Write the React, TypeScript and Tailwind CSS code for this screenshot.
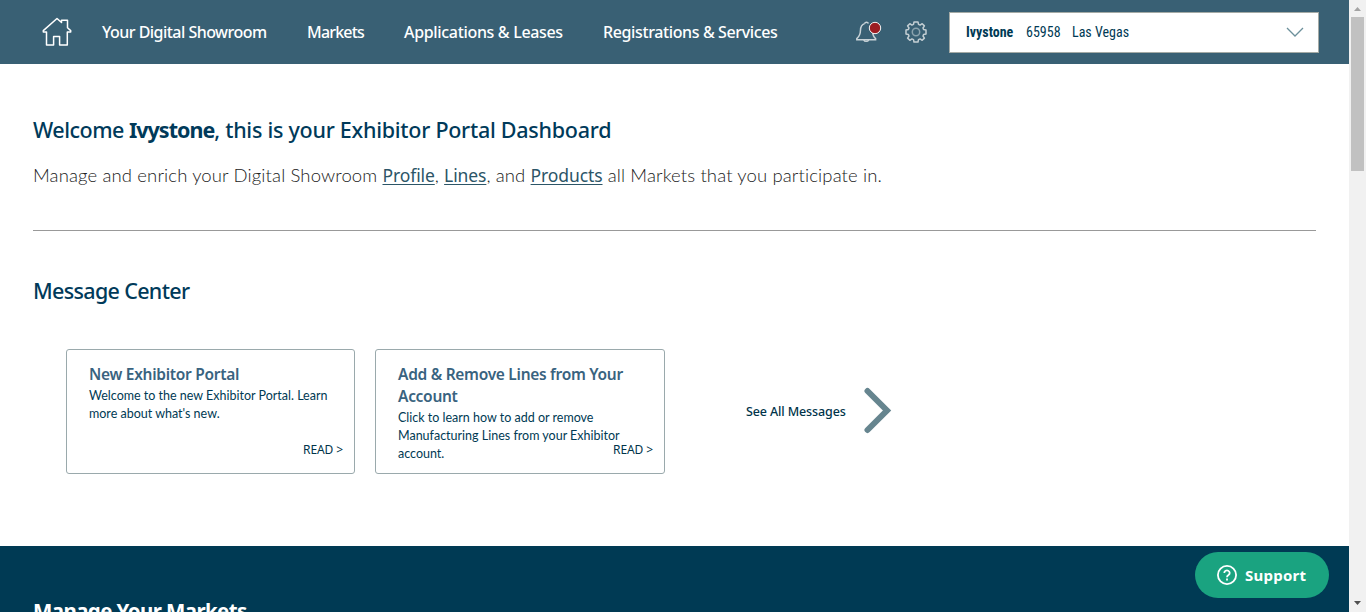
import type { ReactNode } from "react";

const FIRA = "font-['Noto_Sans','Open_Sans',sans-serif]";
const AVENIR = "font-['Lato',sans-serif]";
const TEXT_LINK = "text-[17.5px] font-normal tracking-[-0.1px] text-[#2c5567] underline decoration-1 underline-offset-2 font-['Noto_Sans','Open_Sans',sans-serif]";

function HomeIcon() {
  return (
    <svg className="block h-[30px] w-[30px]" viewBox="0 0 30 30" fill="none" stroke="#fff" strokeWidth="1.5" strokeLinejoin="round">
      <path d="M4.500 28V15H1.300V13.600L15 1.500L19.500 5.500V3.300H25.500V10.800L28.700 13.600V15H25.300V28H17.600V19.400H11.600V28Z" />
    </svg>
  );
}

function BellIcon() {
  return (
    <svg className="block h-[26px] w-[28px]" viewBox="0 0 28 26" fill="none" stroke="#c9d3d8" strokeWidth="1.5">
      <path d="M9.600 4.600a2 2 0 0 1 3.800 0M9.600 4.600C6.600 5.600 5.600 8 5.500 11C5.400 15.500 4 17.800 1.800 19.600V20.800H20.600V19.600C18.600 18 17.700 15.800 17.500 12" />
      <path d="M8.800 21a2.500 1.900 0 0 0 4.800 0" />
      <circle cx="20" cy="9" r="5.700" fill="#9b1c22" stroke="#f2f2f2" strokeWidth="1" />
    </svg>
  );
}

function GearIcon() {
  return (
    <svg className="block h-[22px] w-[22px]" viewBox="0 0 22 22" fill="none" stroke="#c3ced3" strokeWidth="1.500" strokeLinejoin="round">
      <path d="M9 1h4l.5 2.400 1.600.7 2.100-1.400 2.200 2.200L18 7l.6 1.500 2.400.6v3.800l-2.400.6L18 15l1.400 2.100-2.200 2.200-2.100-1.400-1.600.7L13 21H9l-.5-2.400-1.600-.7-2.100 1.400-2.200-2.200L4 15l-.6-1.500L1 12.900V9.100l2.400-.6L4 7 2.600 4.900l2.200-2.200L6.900 4.100l1.600-.7Z" />
      <circle cx="11" cy="11" r="3.700" stroke="#8ba3ae" />
    </svg>
  );
}

function NavItem({ className, children }: { className: string; children: ReactNode }) {
  return <a className={`shrink-0 whitespace-nowrap text-[16px] leading-6 font-medium text-white ${className}`}>{children}</a>;
}

function MessageCard({ title, className, children }: { title: ReactNode; className: string; children: ReactNode }) {
  return (
    <article className={`relative h-[125px] rounded-[3px] border border-[#9aa9ac] pt-[13px] pl-[22px] ${className}`}>
      <h3 className="text-[15.5px] leading-[22px] font-semibold tracking-[-0.29px] whitespace-nowrap text-[#39637f]">{title}</h3>
      <p className={`mt-[2px] text-[12.5px] leading-[18px] whitespace-nowrap text-[#003a54] ${AVENIR}`}>{children}</p>
      <a className="absolute right-[11px] bottom-[14px] text-[12px] leading-[18px] tracking-[-0.1px] text-[#003349]">READ &gt;</a>
    </article>
  );
}

export default function App() {
  return (
    <div className={`flex h-[612px] w-[1366px] overflow-hidden bg-white ${FIRA}`}>
      <div className="relative flex w-[1349px] flex-col">
        <header className="flex h-16 shrink-0 items-center bg-[#396074] pl-[42px]">
          <a className="mr-[30px]"><HomeIcon /></a>
          <nav className="flex w-[753px]">
            <NavItem className="w-[205px] tracking-[-0.53px]">Your Digital Showroom</NavItem>
            <NavItem className="w-[97px] tracking-[-0.8px]">Markets</NavItem>
            <NavItem className="w-[199px] tracking-[-0.33px]">Applications &amp; Leases</NavItem>
            <NavItem className="tracking-[-0.38px]">Registrations &amp; Services</NavItem>
          </nav>
          <BellIcon />
          <div className="ml-[22px]"><GearIcon /></div>
          <div className="ml-[22px] flex h-[41px] w-[370px] items-center border border-[#a4aaa5] bg-white pr-[14px] pl-4 font-['Roboto_Condensed','Roboto',sans-serif] text-[14px] text-[#003a54] [font-stretch:75%]">
            <span className="w-[60px] font-bold">Ivystone</span>
            <span className="w-[46px]">65958</span>
            <span className="grow">Las Vegas</span>
            <svg className="h-[10px] w-[18px]" viewBox="0 0 18 10" fill="none" stroke="#6c909b" strokeWidth="1.3"><path d="M1 1L9 9L17 1" /></svg>
          </div>
        </header>
        <main className="flex h-[482px] shrink-0 flex-col pr-[33px] pl-[33px]">
          <h1 className="mt-[50px] text-[21.5px] leading-8 font-medium tracking-[-0.26px] whitespace-nowrap text-[#003a5a]">
            <span className="tracking-[-0.5px]">Welcome </span><b className="font-bold tracking-[-1px]">Ivystone</b>, this is your Exhibitor Portal Dashboard
          </h1>
          <p className={`mt-[15px] mb-px text-[18.5px] leading-7 font-light tracking-[0.13px] whitespace-nowrap text-[#222] ${AVENIR}`}>
            Manage and enrich your Digital Showroom <a className={TEXT_LINK}>Profile</a>, <a className={TEXT_LINK}>Lines</a>, and <a className={TEXT_LINK}>Products</a> all Markets that you participate in.
          </p>
          <hr className="mt-[40px] border-[#999]" />
          <h2 className="mt-[44px] text-[21.5px] leading-8 font-medium tracking-[-0.67px] whitespace-nowrap text-[#003a5a]">Message Center</h2>
          <section className="mt-[42px] flex pl-[33px]">
            <MessageCard className="mr-5 w-[289px]" title="New Exhibitor Portal">
              Welcome to the new Exhibitor Portal. Learn<br />more about what's new.
            </MessageCard>
            <MessageCard className="w-[290px]" title={<>Add &amp; Remove Lines from Your<br />Account</>}>
              Click to learn how to add or remove<br />Manufacturing Lines from your Exhibitor<br />account.
            </MessageCard>
            <a className="ml-[81px] flex h-[125px] items-center whitespace-nowrap text-[#003349]">
              <span className="w-[117px] pt-[2px] text-[12.5px] font-medium tracking-[-0.12px]">See All Messages</span>
              <svg className="mb-[2px] h-[48px] w-[30px]" viewBox="0 0 30 48" fill="none" stroke="#66858f" strokeWidth="6" strokeLinecap="round"><path d="M4.500 4L24 23.500L4.500 43" /></svg>
            </a>
          </section>
        </main>
        <section className="h-[66px] shrink-0 overflow-hidden bg-[#003a54] pt-[49px] pl-[33px] text-white">
          <h2 className="text-[20.5px] leading-8 font-bold tracking-[-0.6px] whitespace-nowrap">Manage Your Markets</h2>
        </section>
        <button className="absolute top-[552px] left-[1195px] flex h-[46px] w-[134px] items-center rounded-full bg-[#1aa380] pl-[22px] text-white">
          <svg className="mr-[8px] h-5 w-5" viewBox="0 0 20 20" fill="none" stroke="#fff" strokeWidth="1.8"><circle cx="10" cy="10" r="9.1" /><path d="M7.300 8a2.700 2.500 0 1 1 4.200 2C10.400 10.700 10 11 10 12.200M10 13.600v1.800" /></svg>
          <span className="text-[15px] font-bold tracking-[0.25px]">Support</span>
        </button>
      </div>
      <div className="flex w-[17px] flex-col items-center bg-[#f1f1f1]">
        <svg className="h-[17px] w-[17px]" viewBox="0 0 17 17"><path d="M5 11L8.500 7L12 11Z" fill="#a3a3a3" /></svg>
        <div className="h-[154px] w-[13px] bg-[#c1c1c1]" />
        <svg className="mt-auto h-[17px] w-[17px]" viewBox="0 0 17 17"><path d="M5 6L8.500 10L12 6Z" fill="#505050" /></svg>
      </div>
    </div>
  );
}
